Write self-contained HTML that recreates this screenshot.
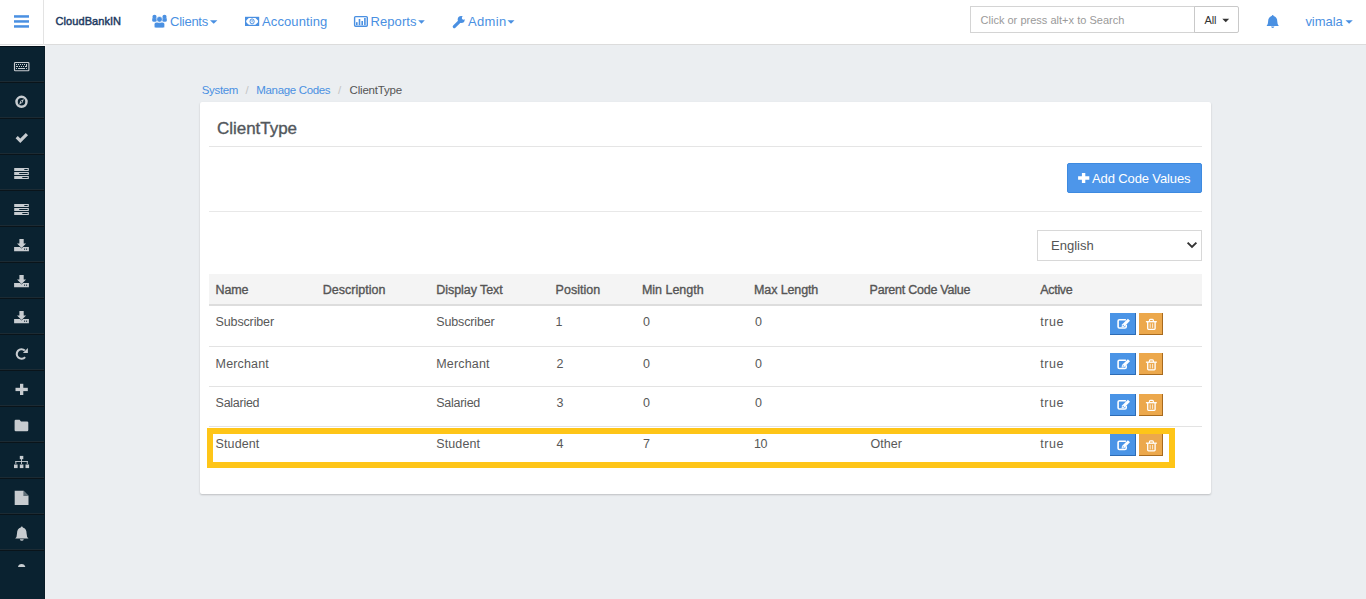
<!DOCTYPE html>
<html><head><meta charset="utf-8">
<style>
*{box-sizing:border-box;margin:0;padding:0}
html,body{width:1366px;height:599px;overflow:hidden}
body{background:#ebeef1;font-family:"Liberation Sans",sans-serif;position:relative;color:#555}
.t{position:absolute;white-space:nowrap;line-height:1}
.b{position:absolute}
svg.ov{position:absolute;left:0;top:0;width:1366px;height:599px}
</style></head><body>
<!-- header -->
<div class="b" style="left:0;top:0;width:1366px;height:45px;background:#fff;border-bottom:1px solid #dcdcdc"></div>
<div class="b" style="left:43px;top:0;width:1px;height:45px;background:#e3e3e3"></div>
<div class="b" style="left:0;top:45px;width:46px;height:1px;background:#fbfbfb"></div>
<!-- search -->
<div class="b" style="left:970px;top:6px;width:225px;height:27px;border:1px solid #d4d4d4;background:#fff"></div>
<div class="b" style="left:1194px;top:6px;width:45px;height:27px;border:1px solid #c9c9c9;border-radius:0 2px 2px 0;background:#fff"></div>

<!-- sidebar -->
<div class="b" style="left:0;top:46px;width:45px;height:553px;background:#0a2230;border-top:1px solid #03101a;border-right:1px solid #081c28"></div>
<div class="b" style="left:45px;top:46px;width:1px;height:553px;background:#eeeff1"></div>
<div class="b" style="left:0;top:81px;width:44px;height:1px;background:#1c2b34"></div>
<div class="b" style="left:0;top:82px;width:44px;height:1px;background:#0a141a"></div>
<div class="b" style="left:0;top:117px;width:44px;height:1px;background:#1c2b34"></div>
<div class="b" style="left:0;top:118px;width:44px;height:1px;background:#0a141a"></div>
<div class="b" style="left:0;top:153px;width:44px;height:1px;background:#1c2b34"></div>
<div class="b" style="left:0;top:154px;width:44px;height:1px;background:#0a141a"></div>
<div class="b" style="left:0;top:189px;width:44px;height:1px;background:#1c2b34"></div>
<div class="b" style="left:0;top:190px;width:44px;height:1px;background:#0a141a"></div>
<div class="b" style="left:0;top:225px;width:44px;height:1px;background:#1c2b34"></div>
<div class="b" style="left:0;top:226px;width:44px;height:1px;background:#0a141a"></div>
<div class="b" style="left:0;top:261px;width:44px;height:1px;background:#1c2b34"></div>
<div class="b" style="left:0;top:262px;width:44px;height:1px;background:#0a141a"></div>
<div class="b" style="left:0;top:297px;width:44px;height:1px;background:#1c2b34"></div>
<div class="b" style="left:0;top:298px;width:44px;height:1px;background:#0a141a"></div>
<div class="b" style="left:0;top:333px;width:44px;height:1px;background:#1c2b34"></div>
<div class="b" style="left:0;top:334px;width:44px;height:1px;background:#0a141a"></div>
<div class="b" style="left:0;top:369px;width:44px;height:1px;background:#1c2b34"></div>
<div class="b" style="left:0;top:370px;width:44px;height:1px;background:#0a141a"></div>
<div class="b" style="left:0;top:405px;width:44px;height:1px;background:#1c2b34"></div>
<div class="b" style="left:0;top:406px;width:44px;height:1px;background:#0a141a"></div>
<div class="b" style="left:0;top:441px;width:44px;height:1px;background:#1c2b34"></div>
<div class="b" style="left:0;top:442px;width:44px;height:1px;background:#0a141a"></div>
<div class="b" style="left:0;top:477px;width:44px;height:1px;background:#1c2b34"></div>
<div class="b" style="left:0;top:478px;width:44px;height:1px;background:#0a141a"></div>
<div class="b" style="left:0;top:513px;width:44px;height:1px;background:#1c2b34"></div>
<div class="b" style="left:0;top:514px;width:44px;height:1px;background:#0a141a"></div>
<div class="b" style="left:0;top:549px;width:44px;height:1px;background:#1c2b34"></div>
<div class="b" style="left:0;top:550px;width:44px;height:1px;background:#0a141a"></div>

<!-- card -->
<div class="b" style="left:200px;top:102px;width:1011px;height:392px;background:#fff;border-radius:2px;box-shadow:0 1px 2px rgba(0,0,0,.2)"></div>
<div class="b" style="left:209px;top:146px;width:993px;height:1px;background:#e5e5e5"></div>
<div class="b" style="left:1067px;top:163px;width:135px;height:30px;background:#4d96ea;border:1px solid #3d8ae0;border-radius:2px"></div>
<div class="b" style="left:209px;top:211px;width:993px;height:1px;background:#e8e8e8"></div>
<div class="b" style="left:1037px;top:230px;width:165px;height:31px;border:1px solid #d8d8d8;background:#fff"></div>

<!-- table -->
<div class="b" style="left:209px;top:274px;width:993px;height:32px;background:#f4f4f4;border-bottom:2px solid #dddddd"></div>
<div class="b" style="left:209px;top:346px;width:993px;height:1px;background:#e3e3e3"></div>
<div class="b" style="left:209px;top:386px;width:993px;height:1px;background:#e3e3e3"></div>
<div class="b" style="left:209px;top:426px;width:993px;height:1px;background:#e3e3e3"></div>

<!-- action buttons -->
<div class="b" style="left:1110px;top:313px;width:26px;height:22px;background:#4a94e6;border-right:1px solid #2d6cb5;border-bottom:1px solid #2d6cb5"></div>
<div class="b" style="left:1139px;top:313px;width:24px;height:22px;background:#eca84c;border-right:1px solid #a86a1e;border-bottom:1px solid #a86a1e"></div>
<div class="b" style="left:1110px;top:353px;width:26px;height:22px;background:#4a94e6;border-right:1px solid #2d6cb5;border-bottom:1px solid #2d6cb5"></div>
<div class="b" style="left:1139px;top:353px;width:24px;height:22px;background:#eca84c;border-right:1px solid #a86a1e;border-bottom:1px solid #a86a1e"></div>
<div class="b" style="left:1110px;top:394px;width:26px;height:22px;background:#4a94e6;border-right:1px solid #2d6cb5;border-bottom:1px solid #2d6cb5"></div>
<div class="b" style="left:1139px;top:394px;width:24px;height:22px;background:#eca84c;border-right:1px solid #a86a1e;border-bottom:1px solid #a86a1e"></div>
<div class="b" style="left:1110px;top:434px;width:26px;height:22px;background:#4a94e6;border-right:1px solid #2d6cb5;border-bottom:1px solid #2d6cb5"></div>
<div class="b" style="left:1139px;top:434px;width:24px;height:22px;background:#eca84c;border-right:1px solid #a86a1e;border-bottom:1px solid #a86a1e"></div>

<!-- highlight -->
<div class="b" style="left:207px;top:428px;width:968px;height:40px;border:6px solid #fec518"></div>

<div class="t" style="left:55.60px;top:16.00px;font-size:11px;color:#1e3a62;letter-spacing:0.060px;-webkit-text-stroke:0.45px #1e3a62">CloudBankIN</div>
<div class="t" style="left:170.00px;top:15.00px;font-size:13px;color:#4a90e2;letter-spacing:-0.250px;">Clients</div>
<div class="t" style="left:262.00px;top:15.00px;font-size:13px;color:#4a90e2;letter-spacing:0.111px;">Accounting</div>
<div class="t" style="left:370.50px;top:15.00px;font-size:13px;color:#4a90e2;letter-spacing:0.083px;">Reports</div>
<div class="t" style="left:468.00px;top:15.00px;font-size:13px;color:#4a90e2;letter-spacing:0.350px;">Admin</div>
<div class="t" style="left:980.50px;top:15.00px;font-size:11px;color:#9a9a9a;letter-spacing:0.017px;">Click or press alt+x to Search</div>
<div class="t" style="left:1204.40px;top:15.00px;font-size:11px;color:#333;letter-spacing:-0.100px;">All</div>
<div class="t" style="left:1305.40px;top:15.00px;font-size:13px;color:#4a90e2;letter-spacing:-0.040px;">vimala</div>
<div class="t" style="left:201.80px;top:85.00px;font-size:11.5px;color:#4a90e2;letter-spacing:-0.360px;">System</div>
<div class="t" style="left:245.60px;top:85.00px;font-size:11.5px;color:#c4c4c4;letter-spacing:0.000px;">/</div>
<div class="t" style="left:256.30px;top:85.00px;font-size:11.5px;color:#4a90e2;letter-spacing:-0.336px;">Manage Codes</div>
<div class="t" style="left:338.00px;top:85.00px;font-size:11.5px;color:#c4c4c4;letter-spacing:0.000px;">/</div>
<div class="t" style="left:349.60px;top:85.00px;font-size:11.5px;color:#555;letter-spacing:-0.200px;">ClientType</div>
<div class="t" style="left:217.10px;top:120.00px;font-size:17px;color:#52575c;letter-spacing:-0.044px;-webkit-text-stroke:0.35px #52575c">ClientType</div>
<div class="t" style="left:1092.00px;top:172.00px;font-size:13px;color:#fff;letter-spacing:-0.121px;">Add Code Values</div>
<div class="t" style="left:1051.10px;top:239.00px;font-size:13px;color:#555;letter-spacing:-0.017px;">English</div>
<div class="t" style="left:215.60px;top:284.00px;font-size:12.5px;color:#555;letter-spacing:-0.133px;-webkit-text-stroke:0.35px #555">Name</div>
<div class="t" style="left:322.70px;top:284.00px;font-size:12.5px;color:#555;letter-spacing:0.030px;-webkit-text-stroke:0.35px #555">Description</div>
<div class="t" style="left:436.30px;top:284.00px;font-size:12.5px;color:#555;letter-spacing:-0.064px;-webkit-text-stroke:0.35px #555">Display Text</div>
<div class="t" style="left:555.50px;top:284.00px;font-size:12.5px;color:#555;letter-spacing:0.043px;-webkit-text-stroke:0.35px #555">Position</div>
<div class="t" style="left:641.90px;top:284.00px;font-size:12.5px;color:#555;letter-spacing:-0.011px;-webkit-text-stroke:0.35px #555">Min Length</div>
<div class="t" style="left:754.00px;top:284.00px;font-size:12.5px;color:#555;letter-spacing:-0.111px;-webkit-text-stroke:0.35px #555">Max Length</div>
<div class="t" style="left:869.60px;top:284.00px;font-size:12.5px;color:#555;letter-spacing:-0.244px;-webkit-text-stroke:0.35px #555">Parent Code Value</div>
<div class="t" style="left:1040.30px;top:284.00px;font-size:12.5px;color:#555;letter-spacing:-0.320px;-webkit-text-stroke:0.35px #555">Active</div>
<div class="t" style="left:215.60px;top:316.00px;font-size:12.5px;color:#585858;letter-spacing:-0.144px;">Subscriber</div>
<div class="t" style="left:436.30px;top:316.00px;font-size:12.5px;color:#585858;letter-spacing:-0.144px;">Subscriber</div>
<div class="t" style="left:555.50px;top:316.00px;font-size:12.5px;color:#585858;letter-spacing:0.000px;">1</div>
<div class="t" style="left:642.90px;top:316.00px;font-size:12.5px;color:#585858;letter-spacing:0.000px;">0</div>
<div class="t" style="left:755.00px;top:316.00px;font-size:12.5px;color:#585858;letter-spacing:0.000px;">0</div>
<div class="t" style="left:1040.30px;top:316.00px;font-size:12.5px;color:#585858;letter-spacing:0.567px;">true</div>
<div class="t" style="left:215.60px;top:358.00px;font-size:12.5px;color:#585858;letter-spacing:0.157px;">Merchant</div>
<div class="t" style="left:436.30px;top:358.00px;font-size:12.5px;color:#585858;letter-spacing:0.157px;">Merchant</div>
<div class="t" style="left:556.50px;top:358.00px;font-size:12.5px;color:#585858;letter-spacing:0.000px;">2</div>
<div class="t" style="left:642.90px;top:358.00px;font-size:12.5px;color:#585858;letter-spacing:0.000px;">0</div>
<div class="t" style="left:755.00px;top:358.00px;font-size:12.5px;color:#585858;letter-spacing:0.000px;">0</div>
<div class="t" style="left:1040.30px;top:358.00px;font-size:12.5px;color:#585858;letter-spacing:0.567px;">true</div>
<div class="t" style="left:215.60px;top:397.00px;font-size:12.5px;color:#585858;letter-spacing:-0.271px;">Salaried</div>
<div class="t" style="left:436.30px;top:397.00px;font-size:12.5px;color:#585858;letter-spacing:-0.271px;">Salaried</div>
<div class="t" style="left:556.50px;top:397.00px;font-size:12.5px;color:#585858;letter-spacing:0.000px;">3</div>
<div class="t" style="left:642.90px;top:397.00px;font-size:12.5px;color:#585858;letter-spacing:0.000px;">0</div>
<div class="t" style="left:755.00px;top:397.00px;font-size:12.5px;color:#585858;letter-spacing:0.000px;">0</div>
<div class="t" style="left:1040.30px;top:397.00px;font-size:12.5px;color:#585858;letter-spacing:0.567px;">true</div>
<div class="t" style="left:215.60px;top:438.00px;font-size:12.5px;color:#585858;letter-spacing:0.100px;">Student</div>
<div class="t" style="left:436.30px;top:438.00px;font-size:12.5px;color:#585858;letter-spacing:0.100px;">Student</div>
<div class="t" style="left:556.50px;top:438.00px;font-size:12.5px;color:#585858;letter-spacing:0.000px;">4</div>
<div class="t" style="left:642.90px;top:438.00px;font-size:12.5px;color:#585858;letter-spacing:0.000px;">7</div>
<div class="t" style="left:754.00px;top:438.00px;font-size:12.5px;color:#585858;letter-spacing:-0.500px;">10</div>
<div class="t" style="left:870.60px;top:438.00px;font-size:12.5px;color:#585858;letter-spacing:0.025px;">Other</div>
<div class="t" style="left:1040.30px;top:438.00px;font-size:12.5px;color:#585858;letter-spacing:0.567px;">true</div>

<svg class="ov" viewBox="0 0 1366 599">
<!-- hamburger -->
<g fill="#4a90e2"><rect x="14" y="15.2" width="15" height="2.5"/><rect x="14" y="20.2" width="15" height="2.5"/><rect x="14" y="25.2" width="15" height="2.5"/></g>
<!-- users -->
<g fill="#4a90e2">
<circle cx="154.5" cy="16.9" r="2.1"/><path d="M152.2 18.2 L156.8 18.2 L156.8 20.3 Q156.8 21.8 155.3 21.8 L153.7 21.8 Q152.2 21.8 152.2 20.3Z"/>
<circle cx="164.5" cy="16.9" r="2.1"/><path d="M162.2 18.2 L166.8 18.2 L166.8 20.3 Q166.8 21.8 165.3 21.8 L163.7 21.8 Q162.2 21.8 162.2 20.3Z"/>
<circle cx="159.5" cy="19.3" r="2.8" stroke="#fff" stroke-width="0.5"/>
<path d="M154.2 26.3 L154.2 24.2 Q154.2 22.2 156.2 22.2 L157.6 22.2 Q159.5 23 161.4 22.2 L162.7 22.2 Q164.7 22.2 164.7 24.2 L164.7 26.3 Q164.7 27.9 163.1 27.9 L155.8 27.9 Q154.2 27.9 154.2 26.3Z" stroke="#fff" stroke-width="0.6"/>
</g>
<!-- money -->
<g>
<rect x="245.6" y="17.4" width="13" height="8" fill="none" stroke="#4a90e2" stroke-width="1.2"/>
<path d="M246 17.8 L249 17.8 L246 20.8Z M258.2 17.8 L255.2 17.8 L258.2 20.8Z M246 25 L249 25 L246 22Z M258.2 25 L255.2 25 L258.2 22Z" fill="#4a90e2"/>
<ellipse cx="252.1" cy="21.4" rx="2.1" ry="2.5" fill="none" stroke="#4a90e2" stroke-width="1"/>
<rect x="251.7" y="19.9" width="0.8" height="2.3" fill="#4a90e2"/>
</g>
<!-- reports -->
<g fill="#4a90e2">
<rect x="354.6" y="16.6" width="12.7" height="9.6" rx="1" fill="none" stroke="#4a90e2" stroke-width="1.4"/>
<rect x="356" y="22.2" width="1.6" height="2.9"/><rect x="358.7" y="19" width="1.6" height="6.1"/><rect x="361.4" y="21" width="1.6" height="4.1"/><rect x="364.1" y="18" width="1.6" height="7.1"/>
</g>
<!-- wrench -->
<g fill="#4a90e2">
<line x1="454.3" y1="26.6" x2="459.6" y2="21.4" stroke="#4a90e2" stroke-width="3.2" stroke-linecap="round"/>
<circle cx="461.2" cy="19.4" r="3.5"/>
<circle cx="463.6" cy="17.9" r="1.8" fill="#fff"/>
</g>
<!-- carets -->
<g fill="#4a90e2">
<path d="M210 20.2 L217.4 20.2 L213.7 23.8Z"/>
<path d="M418.2 20.2 L424.8 20.2 L421.5 23.8Z"/>
<path d="M507.5 20.2 L514.5 20.2 L511 23.8Z"/>
<path d="M1345.5 20.2 L1352.8 20.2 L1349.1 23.8Z"/>
</g>
<path d="M1222.3 18.8 L1229.2 18.8 L1225.75 22.3Z" fill="#333"/>
<!-- header bell -->
<path d="M1272.7 15 Q1273.6 15 1273.6 16 Q1277.3 17 1277.3 21.5 Q1277.3 24.6 1278.8 26 L1266.6 26 Q1268.1 24.6 1268.1 21.5 Q1268.1 17 1271.8 16 Q1271.8 15 1272.7 15Z M1271 26.5 Q1271.3 27.9 1272.7 27.9 Q1274.1 27.9 1274.4 26.5Z" fill="#4a90e2"/>

<!-- sidebar icons -->
<g fill="#c7ccd0" stroke="none">
<!-- keyboard -->
<rect x="14.5" y="62.5" width="14.4" height="8.2" rx="0.8" fill="none" stroke="#c7ccd0" stroke-width="1.15"/>
<rect x="16" y="64" width="1" height="1"/><rect x="18" y="64" width="1" height="1"/><rect x="20" y="64" width="1" height="1"/><rect x="22" y="64" width="1" height="1"/><rect x="24" y="64" width="1" height="1"/><rect x="26" y="64" width="1" height="3"/>
<rect x="16" y="66" width="2" height="1"/><rect x="19" y="66" width="1" height="1"/><rect x="21" y="66" width="1" height="1"/><rect x="23" y="66" width="1" height="1"/><rect x="25" y="66" width="1" height="1"/>
<rect x="16" y="68" width="1" height="1"/><rect x="18" y="68" width="7" height="1"/><rect x="26" y="68" width="1" height="1"/>
<!-- compass -->
<circle cx="21.5" cy="101.8" r="5" fill="none" stroke="#c7ccd0" stroke-width="2.5"/>
<path d="M23.9 98.9 L22.6 102.6 L19.1 104.8 L20.4 101.1Z"/>
<circle cx="21.5" cy="101.8" r="0.7" fill="#0a2230"/>
<!-- check -->
<path d="M15.6 138.2 L17.8 136 L20.3 138.5 L25.8 133 L28 135.2 L20.3 142.9Z"/>
<!-- tasks x2 -->
<g id="tasks">
<rect x="14.2" y="168" width="14.6" height="3"/><rect x="14.2" y="172" width="14.6" height="3"/><rect x="14.2" y="176" width="14.6" height="3"/>
<rect x="24.3" y="169" width="3.4" height="1" fill="#0a2230"/><rect x="19.2" y="173" width="8.5" height="1" fill="#0a2230"/><rect x="22.3" y="177" width="5.4" height="1" fill="#0a2230"/>
</g>
<use href="#tasks" y="36"/>
<!-- download x3 -->
<g id="dl">
<path d="M19.4 239 L23.7 239 L23.7 243.4 L26.1 243.4 L21.55 247.9 L17 243.4 L19.4 243.4Z"/>
<path d="M14.1 247 L20 247 L21.55 248.6 L23.1 247 L28.9 247 L28.9 251.2 L14.1 251.2Z"/>
<rect x="24" y="248.6" width="1.1" height="1.1" fill="#0a2230"/><rect x="26" y="248.6" width="1.1" height="1.1" fill="#0a2230"/>
</g>
<use href="#dl" y="36"/><use href="#dl" y="72"/>
<!-- refresh -->
<path d="M24.8 350.6 A4.75 4.75 0 1 0 25.1 357.1" fill="none" stroke="#c7ccd0" stroke-width="2.1"/>
<path d="M27.9 348 L27.9 353 L22.9 353Z"/>
<!-- plus -->
<rect x="20" y="383.8" width="3.3" height="11.2"/><rect x="15.5" y="387.8" width="12.3" height="3.3"/>
<!-- folder -->
<path d="M14.6 421 Q14.6 419.8 15.8 419.8 L19.6 419.8 L21 421.4 L27.1 421.4 Q28.3 421.4 28.3 422.6 L28.3 430 Q28.3 431.2 27.1 431.2 L15.8 431.2 Q14.6 431.2 14.6 430Z"/>
<!-- sitemap -->
<rect x="19.8" y="455.9" width="3.5" height="3.3"/>
<rect x="21.1" y="459" width="0.9" height="2.6"/>
<rect x="15.4" y="461" width="12.3" height="0.9"/>
<rect x="15.4" y="461" width="0.9" height="3"/><rect x="21.1" y="461" width="0.9" height="3"/><rect x="26.8" y="461" width="0.9" height="3"/>
<rect x="14" y="464.5" width="3.6" height="3.6"/><rect x="19.8" y="464.5" width="3.6" height="3.6"/><rect x="25.5" y="464.5" width="3.6" height="3.6"/>
<!-- file -->
<path d="M14.7 490.8 L23.6 490.8 L28.5 495.7 L28.5 504.9 L14.7 504.9Z"/>
<path d="M23.4 490.8 L23.4 495.9 L28.5 495.9Z" fill="#0a2230" opacity="0.55"/>
<!-- bell -->
<path d="M21.8 526.4 Q22.8 526.4 22.8 527.5 Q26.6 528.7 26.6 533.5 Q26.6 537 28.5 538.6 L15.2 538.6 Q17 537 17 533.5 Q17 528.7 20.8 527.5 Q20.8 526.4 21.8 526.4Z M19.8 539.2 Q20.2 540.8 21.8 540.8 Q23.4 540.8 23.8 539.2Z"/>
<!-- partial -->
<path d="M18 567 Q18.5 564 21.6 564 Q24.7 564 25.3 567Z"/>
</g>

<!-- card button plus -->
<path d="M1081.9 172.9 L1085.3 172.9 L1085.3 176.3 L1089.3 176.3 L1089.3 179.7 L1085.3 179.7 L1085.3 183 L1081.9 183 L1081.9 179.7 L1078.1 179.7 L1078.1 176.3 L1081.9 176.3Z" fill="#fff"/>
<!-- select chevron -->
<path d="M1187.6 242.6 L1192 247 L1196.4 242.6" fill="none" stroke="#333" stroke-width="1.9"/>

<!-- edit/trash icons -->
<g id="acts" fill="none" stroke="#fff">
<path d="M1125.9 319.8 L1119.4 319.8 Q1118.1 319.8 1118.1 321.1 L1118.1 326.7 Q1118.1 328 1119.4 328 L1124.9 328 Q1126.2 328 1126.2 326.7 L1126.2 324.8" stroke-width="1.6"/>
<path d="M1121.6 327 L1122 324.6 L1127.9 318.7 L1130 320.8 L1124.1 326.7 Z" fill="#fff" stroke="none"/>
<circle cx="1123.2" cy="325.4" r="0.55" fill="#4a94e6" stroke="none"/>
<path d="M1145.9 321.7 L1156.8 321.7" stroke-width="1.3"/>
<path d="M1149.3 321.5 L1149.6 319.8 Q1149.8 319.3 1150.5 319.3 L1152.3 319.3 Q1153 319.3 1153.2 319.8 L1153.5 321.5" stroke-width="1.2"/>
<path d="M1147.7 322 L1147.7 328.6 Q1147.7 329.4 1148.5 329.4 L1154.3 329.4 Q1155.1 329.4 1155.1 328.6 L1155.1 322" stroke-width="1.3"/>
<path d="M1150.2 323.4 L1150.2 327.9 M1152.6 323.4 L1152.6 327.9" stroke-width="0.9" stroke-opacity="0.85"/>
</g>
<use href="#acts" y="40.5"/><use href="#acts" y="81"/><use href="#acts" y="121.5"/>
</svg>
</body></html>
